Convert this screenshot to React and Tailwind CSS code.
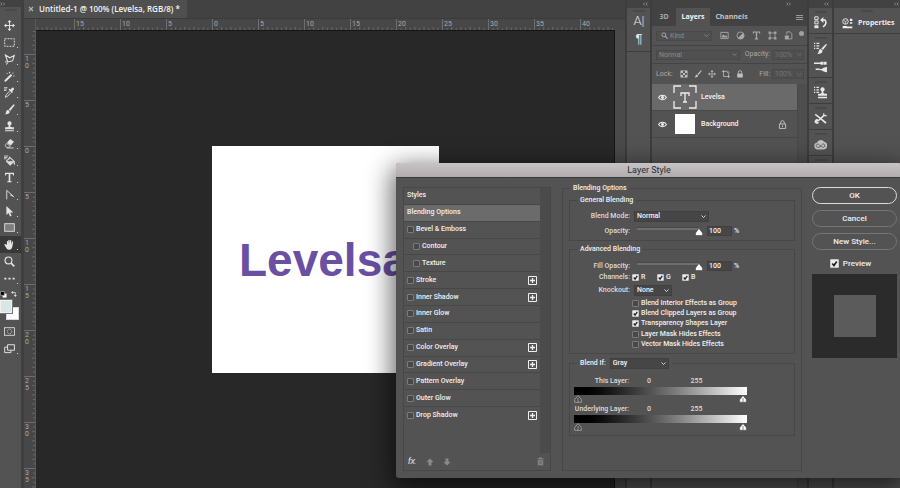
import { useState } from 'react';
import clsx from 'clsx';

const ICONS = {
  move: (
    <>
      <path d="M8 2v12M2 8h12" stroke="currentColor" strokeWidth="1.4" />
      <path d="M8 0l3 3.4H5zM8 16l3-3.4H5zM0 8l3.4-3v6zM16 8l-3.4-3v6z" />
    </>
  ),
  marquee: <rect x="1" y="2.5" width="14" height="11" fill="none" stroke="currentColor" strokeWidth="1.4" strokeDasharray="2.6 1.6" />,
  lasso: (
    <>
      <path d="M2 1.5l6.5 4L15 2l-2.5 8-7 1.5z" fill="none" stroke="currentColor" strokeWidth="1.5" />
      <path d="M5.5 11.5c-1.5-2-4-1-3 .8s3.5.2 2.5 1.7l-2 1.5" fill="none" stroke="currentColor" strokeWidth="1.2" />
    </>
  ),
  wand: (
    <>
      <path d="M1 13.2L10 4.5l2 2L3 15.2c-1.5 1-3-.5-2-2z" />
      <path d="M8 .5l.8 2 .9.4-2 .9L7 2zM13 2l1 1-1 1.2L12 3zM14.5 6l1 1.2-1 1.3-1-1.3zM4.500 2.5l1 1-1 1-1-1z" />
    </>
  ),
  eyedropper: (
    <>
      <path d="M9.5 3.5l2-2.2c1.5-1.3 4 .7 2.8 2.5l-2.3 2.3 1 1-1.5 1.5-5-5L8 2.5z" />
      <path d="M8 6l-5 5.5-1 3.5 3-1.3L10.2 8" fill="none" stroke="currentColor" strokeWidth="1.3" />
      <path d="M0 1h5M0 3h4M0 5h3.5" stroke="currentColor" strokeWidth="1.2" />
    </>
  ),
  brush: (
    <>
      <path d="M14.8.6c.8.5.4 1.5-.2 2.3L9 10 6.8 8 13 1.3c.6-.6 1.2-1 1.8-.7z" />
      <path d="M6 8.8l2.3 2.2c.2 3-3 4.5-7.3 3.8 2-1 1.5-2 2.2-4 .5-1.4 1.6-2 2.8-2z" />
    </>
  ),
  stamp: (
    <>
      <circle cx="8" cy="3.5" r="3" />
      <path d="M6.8 5h2.4v2.5c0 1 .8 1.5 5.3 1.7V12h-13V9.2c4.5-.2 5.3-.7 5.3-1.7zM1.5 13.3h13v1.7h-13z" />
    </>
  ),
  eraser: (
    <>
      <path d="M9 1.5l5.5 3.8L9.7 11 4.3 7z" />
      <path d="M3.7 7.8l5.4 4-1.5 1.9H4.2L1.5 11.5z" fill="none" stroke="currentColor" strokeWidth="1.1" />
      <path d="M4 14.5h10" stroke="currentColor" strokeWidth="1.2" />
    </>
  ),
  bucket: (
    <>
      <path d="M8.5 3.5l6 5.500-5.5 5.5L3.5 9z" fill="none" stroke="currentColor" strokeWidth="1.5" />
      <path d="M5 9.5l7.5-.5L9 13.5zM14.5 9c1.5 2 2 4 .8 5-1.3-.8-1.3-3-.8-5zM8 2v5" stroke="currentColor" strokeWidth=".7" />
      <path d="M0 1.5h6M0 3.5h5M0 5.5h3.5" stroke="currentColor" strokeWidth="1.2" />
    </>
  ),
  type: <path d="M1.5 1h13v4h-1.3c-.3-1.6-.8-2.2-2.3-2.2H9.2v9.4c0 1 .4 1.3 2 1.4V15H4.8v-1.4c1.6-.1 2-.4 2-1.4V2.8H5.1C3.6 2.8 3.1 3.4 2.8 5H1.5z" />,
  pen: <path d="M4 15V2l10 9-5-2.5" fill="none" stroke="currentColor" strokeWidth="1.3" />,
  arrow: <path d="M3.500 0v13.2l3.2-2.9 2 4.900 2.3-1-2-4.7H13.5z" />,
  rect: <rect x="1" y="2.5" width="14" height="11" fill="#7d7d7d" stroke="currentColor" strokeWidth="1.3" />,
  hand: <path d="M4.2 8.5V3.8c0-1.3 1.7-1.3 1.8 0L6.3 7V1.9c0-1.3 1.9-1.3 1.9 0V7l.6-4.7c.2-1.3 1.9-1 1.8.2L10.4 7.5l1.2-3.2c.4-1.2 2-.7 1.7.5L12.3 10c-.5 3.5-1.6 5.5-5 5.5-2.5 0-3.7-1.5-4.8-3.8L.7 8.700C.2 7.5 1.5 6.9 2.3 7.7z" />,
  zoom: (
    <>
      <circle cx="6.5" cy="6.5" r="5" fill="none" stroke="currentColor" strokeWidth="1.6" />
      <path d="M10.3 10.3L15 15" stroke="currentColor" strokeWidth="2.4" />
    </>
  ),
  dots: <path d="M.5 6.8h3v2.6h-3zM6.5 6.8h3v2.6h-3zM12.5 6.8h3v2.6h-3z" />,
  mask: (
    <>
      <rect x=".8" y="2.5" width="14.4" height="11" fill="none" stroke="currentColor" strokeWidth="1.2" />
      <circle cx="8" cy="8" r="3.3" fill="none" stroke="currentColor" strokeDasharray="1.5 1" />
    </>
  ),
  screens: (
    <>
      <path d="M5 6H1v8h9v-3" fill="none" stroke="currentColor" strokeWidth="1.4" />
      <path d="M5.2 2.5h10v8h-10z" fill="none" stroke="currentColor" strokeWidth="1.4" />
    </>
  ),
  history: (
    <>
      <path d="M1 1h4v3.5H1zM1 6.2h4v3.5H1z" fill="none" stroke="currentColor" strokeWidth="1.2" />
      <path d="M.5 11.5h5V15h-5z" />
      <path d="M9 5h4.5c2 2.5 1.5 6-2.5 8.5" fill="none" stroke="currentColor" strokeWidth="1.9" />
      <path d="M7.5 5l4-3.8v7.5z" />
    </>
  ),
  brushes: (
    <>
      <path d="M0 1h1.5v1.5H0zM3 1h3.5v1.5H3zM0 4h1.5v1.5H0zM3 4h3.5v1.5H3zM0 7h1.5v1.5H0zM3 7h3v1.5H3z" />
      <path d="M15.6 2.5c.5.5.2 1.2-.4 1.9L11 9.700 9 8l5.1-4.8c.6-.5 1.1-1 1.5-.7zM8.400 8.7l2.2 2c-.3 2.8-3 4.3-6.6 4 1.7-1 1.5-3 2.2-4.700.5-.9 1.2-1.3 2.2-1.3z" />
    </>
  ),
  sliders: (
    <>
      <path d="M0 3.200h8v1.6H0zM7 11h9v1.6H7zM8 2.200h3v3.600H8z" />
      <path d="M11.500 2.2h4v3.600h-4z" />
      <path d="M16 8.500v6.500c-3 0-5.5-1-7-3.200 1.500-2.300 4-3.300 7-3.300zM2 10.500h5v1.800H2z" />
    </>
  ),
  sourceStamp: (
    <>
      <path d="M0 1h1.5v1.5H0zM3 1h3v1.5H3zM0 4h1.5v1.5H0zM3 4h3v1.5H3zM0 7h1.5v1.5H0zM3 7h3v1.5H3z" />
      <circle cx="10.5" cy="4.2" r="2.6" />
      <path d="M9.5 5h2v3c0 1 1 1.4 4.5 1.6V12H5V9.600C8.5 9.4 9.5 9 9.5 8zM5 13.2h11V15H5z" />
    </>
  ),
  tools: (
    <>
      <path d="M1.500 3l6 4.500 3.500 3" fill="none" stroke="currentColor" strokeWidth="1.8" />
      <path d="M12 4.500L5 11" fill="none" stroke="currentColor" strokeWidth="1.8" />
      <path d="M12 1.500v3h3.500" fill="none" stroke="currentColor" strokeWidth="1.5" />
      <path d="M10.500 9l5 3.500-1.500 2-4.500-4zM5.500 9.500a2.800 2.800 0 1 0 .8 3L4 12.300z" />
    </>
  ),
  cloud: (
    <>
      <path d="M4.5 14a4.300 4.300 0 0 1-.7-8.500A5 5 0 0 1 12.500 4.700a4.700 4.700 0 0 1-.5 9.300z" opacity=".75" />
      <path d="M9 11l-3-3c-2.500-2-4.500 1.500-2.500 3s3.500 0 5-1.500 2.500-3 4-1.800 1 3.800-1 3.800-2-1-3-1.800" fill="none" stroke="#535353" strokeWidth="1" />
    </>
  ),
  properties: (
    <>
      <circle cx="5" cy="5" r="4" fill="none" stroke="currentColor" strokeWidth="1.3" />
      <path d="M2.5 3.5L5 5l2.5-1.5M5 5v3.5" stroke="currentColor" fill="none" />
      <path d="M11.5 1H15v3.5h-3.5zM11.5 6H15v2.500h-3.5zM1 11.5h6V15H1zM7 12.5h8V15H7z" />
    </>
  ),
  image: (
    <>
      <path d="M1.5 2.5h13v11h-13z" fill="none" stroke="currentColor" strokeWidth="1.6" />
      <path d="M3.5 11.5V9l2.5-3 2.5 3 2-1.5 2 2v2z" />
    </>
  ),
  adjust: (
    <>
      <circle cx="8" cy="8" r="6.3" fill="none" stroke="currentColor" strokeWidth="1.5" />
      <path d="M12.5 3.5a6.3 6.3 0 0 1-9 9z" />
    </>
  ),
  shape: (
    <>
      <path d="M3.5 3.5h9v9h-9z" fill="none" stroke="currentColor" strokeWidth="1.4" />
      <path d="M1 1h4v4H1zM11 1h4v4h-4zM1 11h4v4H1zM11 11h4v4h-4z" />
    </>
  ),
  smart: (
    <>
      <path d="M5 6V1.5h6L14 5v9H8" fill="none" stroke="currentColor" strokeWidth="1.5" />
      <path d="M1.5 8h7v7h-7z" />
    </>
  ),
  checker: (
    <>
      <path d="M1.5 1.5h13v13h-13z" fill="none" stroke="currentColor" strokeWidth="1.4" />
      <path d="M2 2h4v4H2zM10 2h4v4h-4zM6 6h4v4H6zM2 10h4v4H2zM10 10h4v4h-4z" />
    </>
  ),
  artboard: <path d="M3 0v13h13M0 3h9l4 4v9M10 1l5 5" fill="none" stroke="currentColor" strokeWidth="1.5" />,
  lock: (
    <>
      <path d="M2.5 7h11v8h-11z" />
      <path d="M4.8 7V4.500a3.2 3.2 0 0 1 6.4 0V7" fill="none" stroke="currentColor" strokeWidth="1.7" />
    </>
  ),
  lockOutline: (
    <>
      <path d="M2.5 7h11v8h-11z" fill="none" stroke="currentColor" strokeWidth="1.5" />
      <path d="M4.8 7V4.500a3.2 3.2 0 0 1 6.4 0V7M8 9.5v3" fill="none" stroke="currentColor" strokeWidth="1.5" />
    </>
  ),
  eye: (
    <>
      <path d="M1 8c3-5.3 11-5.3 14 0-3 5.3-11 5.3-14 0z" fill="none" stroke="currentColor" strokeWidth="1.8" />
      <circle cx="8" cy="8" r="2.6" />
    </>
  ),
  up: <path d="M8 1l7 7h-4v7H5V8H1z" />,
  down: <path d="M8 15l7-7h-4V1H5v7H1z" />,
  trash: (
    <>
      <path d="M2 2.5h4V1h4v1.5h4V4H2z" />
      <path d="M3 5h10v10H3zM6 7v6M8 7v6M10 7v6" stroke="#535353" strokeWidth=".8" />
    </>
  ),
  swap: (
    <>
      <path d="M4 4h7.500v8" fill="none" stroke="currentColor" strokeWidth="2" />
      <path d="M5.500 0v8L0 4zM7.500 10.500h8L11.500 16z" />
    </>
  ),
  defaults: (
    <>
      <path d="M6 6h9v9H6z" fill="#fff" />
      <path d="M1 1h9v9H1z" fill="#000" stroke="#bbb" strokeWidth="1.5" />
    </>
  ),
  search: (
    <>
      <circle cx="6.5" cy="6.5" r="4.5" fill="none" stroke="currentColor" strokeWidth="2" />
      <path d="M10 10l5 5" stroke="currentColor" strokeWidth="2.4" />
    </>
  ),
};

const Icon = ({ name, className }) => (
  <svg viewBox="0 0 16 16" fill="currentColor" aria-hidden="true" className={clsx('shrink-0', className)}>
    {ICONS[name]}
  </svg>
);

const Chevron = ({ className }) => (
  <svg viewBox="0 0 10 6" fill="none" stroke="currentColor" strokeWidth="1.6" className={clsx('w-[5px] h-[3px] pointer-events-none', className)}>
    <path d="M1 1l4 4 4-4" />
  </svg>
);

const Collapse = ({ right = false, className }) => (
  <svg viewBox="0 0 10 8" fill="none" stroke="#a8a8a8" strokeWidth="1.3" className={clsx('w-[5px] h-1', className)}>
    <path d={right ? 'M1 1l3 3-3 3M6 1l3 3-3 3' : 'M4 1L1 4l3 3M9 1L6 4l3 3'} />
  </svg>
);

const Grip = () => <div className="mx-auto h-0.5 w-3 shrink-0 border-y border-[#494949]" />;

const TOOLS = [
  ['move', 'Move'], ['marquee', 'Marquee'], ['lasso', 'Lasso'], ['wand', 'Magic Wand'],
  ['eyedropper', 'Eyedropper'], ['brush', 'Brush'], ['stamp', 'Clone Stamp'], ['eraser', 'Eraser'],
  ['bucket', 'Paint Bucket'], ['type', 'Type'], ['pen', 'Pen'], ['arrow', 'Path Selection'],
  ['rect', 'Rectangle'], ['hand', 'Hand'], ['zoom', 'Zoom'], ['dots', 'Edit Toolbar'],
];

const ToolButton = ({ name, label, active, onClick }) => (
  <button
    aria-label={label}
    onClick={onClick}
    className={clsx('relative grid place-items-center pr-0.5', active && 'bg-[#383838]')}
  >
    <Icon name={name} className="w-[11px] h-[11px]" />
    {name !== 'move' && name !== 'zoom' && name !== 'mask' && (
      <span className="absolute bottom-[3px] right-[3px] w-px h-px bg-[#d0d0d0]" />
    )}
  </button>
);

const Toolbar = () => {
  const [tool, setTool] = useState('hand');

  return (
    <aside className="w-[21px] shrink-0 bg-[#535353] text-[#e4e4e4] flex flex-col">
      <div className="h-[7px] shrink-0 bg-[#424242] flex items-center">
        <Collapse right />
      </div>
      <div className="h-[10px] shrink-0 pt-0.5"><Grip /></div>
      <div className="grid auto-rows-fr h-[270px] shrink-0">
        {TOOLS.map(([name, label]) => (
          <ToolButton key={name} name={name} label={label} active={tool === name} onClick={() => setTool(name)} />
        ))}
      </div>
      <div className="flex items-center justify-between h-3 pr-1 mt-px">
        <Icon name="defaults" className="w-[7px] h-[7px]" />
        <Icon name="swap" className="w-[6px] h-[6px]" />
      </div>
      <div className="relative h-5">
        <span className="absolute right-0.5 bottom-0 w-[13px] h-[13px] bg-white border border-[#d8d8d8]" />
        <span className="absolute left-0 top-0 w-3 h-[13px] bg-[#d8e6e6] border border-[#f0f0f0] shadow-[0_0_0_1px_#777]" />
      </div>
      <div className="grid auto-rows-fr h-[34px] mt-[3px]">
        <ToolButton name="mask" label="Quick Mask" />
        <ToolButton name="screens" label="Screen Mode" />
      </div>
    </aside>
  );
};

const TICKS = Array.from({ length: 9 }, (_, i) => (i + 1) * 4.6);

const RulerCell = ({ label, vertical }) => (
  <div className={clsx('relative shrink-0 border-[#6d6d6d]', vertical ? 'h-[46px] border-t' : 'w-[46px] border-l')}>
    <svg className="absolute inset-0 w-full h-full" stroke="#6a6a6a" strokeWidth="1">
      {TICKS.map((t, i) =>
        vertical ? (
          <path key={t} d={`M${i % 2 ? 8 : 9} ${t - 0.5}H12`} />
        ) : (
          <path key={t} d={`M${t - 0.5} ${i % 2 ? 8 : 9}V12`} />
        )
      )}
    </svg>
    <span className={clsx('relative block text-[7px] leading-[7px] text-[#a9a9a9]', vertical ? 'w-1 ml-px pt-px break-all' : 'pl-px pt-0.5')}>{label}</span>
  </div>
);

const Document = () => (
  <main className="flex-1 min-w-0 flex flex-col">
    <div className="h-[18px] shrink-0 flex bg-[#424242]">
      <div className="flex items-center gap-[5px] bg-[#4f4f4f] pl-1 pr-[7px] font-['Open_Sans'] text-[8px] font-semibold text-[#f4f4f4] whitespace-nowrap">
        <button aria-label="Close document" className="w-[6px] h-[6px] text-[#b0b0b0]">
          <svg viewBox="0 0 6 6" stroke="currentColor" strokeWidth="1.2"><path d="M1 1l4 4M5 1L1 5" /></svg>
        </button>
        Untitled-1 @ 100% (Levelsa, RGB/8) *
      </div>
    </div>
    <div className="h-3 shrink-0 flex bg-[#474747] border-t border-[#3b3b3b]">
      <div className="w-3 shrink-0 border-r border-[#5a5a5a]" />
      <div className="flex-1 min-w-0 flex overflow-hidden mr-[10px]">
        <div className="w-[38px] shrink-0 flex justify-end overflow-hidden"><RulerCell /></div>
        {['15', '10', '5', '0', '5', '10', '15', '20', '25', '30', '35', '40'].map((n, i) => (
          <RulerCell key={i} label={n} />
        ))}
      </div>
    </div>
    <div className="flex-1 min-h-0 flex">
      <div className="w-3 shrink-0 bg-[#474747] overflow-hidden border-r border-[#5a5a5a]">
        <div className="h-6 flex flex-col justify-end overflow-hidden"><RulerCell vertical /></div>
        {['10', '5', '0', '5', '10', '15', '20', '25', '30', '35'].map((n, i) => (
          <RulerCell key={i} label={n} vertical />
        ))}
      </div>
      <div className="relative flex-1 bg-[#282828] border-t border-r border-[#151515] overflow-hidden">
        <div className="absolute left-[176px] top-[115px] w-[227px] h-[227px] bg-white overflow-hidden">
          <p className="pl-[27px] pt-[88px] font-['Liberation_Sans'] text-[46px] leading-[52px] font-bold text-[#6a50a3]">Levelsa</p>
        </div>
      </div>
      <div className="w-[10px] shrink-0 bg-[#4a4a4a]" />
    </div>
  </main>
);

const CharacterDock = () => (
  <aside className="w-[25px] shrink-0 border-l-2 border-[#3d3d3d] bg-[#535353] text-[#e6e6e6] flex flex-col">
    <div className="h-2 shrink-0 bg-[#424242] flex items-center justify-end pr-0.5"><Collapse /></div>
    <div className="h-11 border-b border-[#3d3d3d] pt-0.5 pl-px flex flex-col items-center">
      <Grip />
      <button className="text-[13px] leading-[18px] font-['Roboto'] font-light">A|</button>
      <button className="text-[13px] leading-[18px] font-['Liberation_Sans']">¶</button>
    </div>
  </aside>
);

const DimSelect = ({ label, value, className, icon, faint }) => (
  <label className={clsx('relative flex items-center h-[10px] border border-[#494949] bg-[#505050]', faint ? 'text-[#707070]' : 'text-[#8c8c8c]', className)}>
    {icon && <Icon name={icon} className="w-[7px] h-[7px] ml-1 text-[#b0b0b0]" />}
    <select aria-label={label} className="appearance-none w-full pl-0.5 text-[7px] leading-[8px] outline-none">
      <option>{value}</option>
    </select>
    {faint && <span className="absolute inset-y-0 right-2 border-l border-[#494949]" />}
    <Chevron className={clsx('absolute', faint ? 'right-px' : 'right-0.5')} />
  </label>
);

const LayerRow = ({ name, selected, locked, children }) => (
  <li className={clsx('flex items-center h-[27px] pl-[6px] pr-[10px] border-b border-[#484848]', selected && 'bg-[#6a6a6a]')}>
    <button aria-label={`Toggle ${name}`}><Icon name="eye" className="w-[9px] h-[9px] text-[#f0f0f0]" /></button>
    <div className="w-6 h-6 ml-[6px] mr-1 grid place-items-center shrink-0">{children}</div>
    <span className="flex-1 text-[7px] font-medium text-[#f4f4f4]">{name}</span>
    {locked && <Icon name="lockOutline" className="w-[9px] h-[9px] text-[#d0d0d0]" />}
  </li>
);

const LayersPanel = () => (
  <section className="w-[159px] shrink-0 border-x-2 border-[#3d3d3d] bg-[#4e4e4e] flex flex-col text-[#a8a8a8] text-[7px]">
    <div className="h-2 shrink-0 bg-[#424242] flex items-center justify-end pr-4"><Collapse right /></div>
    <div className="h-[18px] shrink-0 flex items-stretch bg-[#424242] font-['Open_Sans'] font-bold">
      <button className="w-6">3D</button>
      <button className="w-[34px] bg-[#535353] text-[#f4f4f4]">Layers</button>
      <button className="w-[43px] text-[#c4c4c4]">Channels</button>
      <button aria-label="Panel menu" className="ml-auto mr-1 w-[7px]">
        <span className="block h-[5px] border-y border-[#999] bg-[linear-gradient(#424242_1px,#999_1px,#999_2px,#424242_2px)]" />
      </button>
    </div>
    <div className="h-5 shrink-0 flex items-center border-b border-[#444] bg-[#535353] pl-1 pr-[3px]">
      <DimSelect label="Filter kind" value="Kind" icon="search" className="w-14" />
      <div className="flex items-center gap-[7px] ml-2">
        {['image', 'adjust', 'type', 'shape', 'smart'].map((n) => (
          <button key={n} aria-label={`Filter ${n}`}><Icon name={n} className="w-[9px] h-[9px]" /></button>
        ))}
      </div>
      <span className="ml-auto mb-1 w-[5px] h-[5px] rounded-full bg-[#a0a0a0]" />
    </div>
    <div className="h-[18px] shrink-0 flex items-center border-b border-[#444] bg-[#535353] pl-1 pr-[3px]">
      <DimSelect label="Blend mode" value="Normal" className="w-[84px]" />
      <span className="flex-1 text-right pr-0.5">Opacity:</span>
      <DimSelect label="Opacity" value="100%" faint className="w-8" />
    </div>
    <div className="h-5 shrink-0 flex items-center bg-[#535353] pl-1 pr-[3px]">
      <span className="w-6">Lock:</span>
      <div className="flex items-center gap-[6px]">
        {['checker', 'brush', 'move', 'artboard', 'lock'].map((n) => (
          <button key={n} aria-label={`Lock ${n}`}><Icon name={n} className="w-[8px] h-[8px] text-[#c0c0c0]" /></button>
        ))}
      </div>
      <span className="flex-1 text-right pr-0.5">Fill:</span>
      <DimSelect label="Fill" value="100%" faint className="w-8" />
    </div>
    <ul className="mr-[9px] flex-1 border-r border-[#484848] bg-[#535353]">
      <LayerRow name="Levelsa" selected>
        <svg viewBox="0 0 24 24" className="w-6 h-6" fill="none" stroke="#eee" strokeWidth="1.3">
          <path d="M1 8V1h7M16 1h7v7M23 16v7h-7M8 23H1v-7" />
          <path d="M8 11V8h8v3M12 8v9M10 17h4" />
        </svg>
      </LayerRow>
      <LayerRow name="Background" locked>
        <span className="w-5 h-5 bg-white" />
      </LayerRow>
    </ul>
  </section>
);

const DOCK_GROUPS = [['history'], ['brushes', 'sliders'], ['sourceStamp'], ['tools'], ['cloud'], ['image']];

const IconDock = () => (
  <aside className="w-[25px] shrink-0 border-r-2 border-[#3d3d3d] bg-[#535353] text-[#e8e8e8] flex flex-col">
    <div className="h-2 shrink-0 bg-[#424242] flex items-center justify-end pr-[3px]"><Collapse /></div>
    {DOCK_GROUPS.map((group) => (
      <div key={group[0]} className="border-b border-[#3d3d3d] pt-[3px] pb-0.5 flex flex-col items-center">
        <Grip />
        {group.map((n) => (
          <button key={n} aria-label={n} className="grid place-items-center h-[18px]">
            <Icon name={n} className="w-[13px] h-[13px]" />
          </button>
        ))}
      </div>
    ))}
  </aside>
);

const PropertiesPanel = () => (
  <section className="w-[66px] shrink-0 bg-[#535353] flex flex-col">
    <div className="h-2 shrink-0 bg-[#424242] flex items-center justify-end pr-px"><Collapse /></div>
    <div className="h-[26px] pt-0.5 border-b border-[#3d3d3d]">
      <Grip />
      <button className="flex items-center gap-[5px] pl-2 h-[22px] font-['Open_Sans'] text-[7px] font-bold text-[#f0f0f0]">
        <Icon name="properties" className="w-[11px] h-[11px]" />
        Properties
      </button>
    </div>
  </section>
);

const Check = ({ label, checked = false, big = false, className }) => (
  <label className={clsx('flex items-center', big ? 'gap-1 text-[8px]' : 'gap-0.5', className)}>
    <span className={clsx('relative grid shrink-0', big ? 'w-[9px] h-[9px]' : 'w-[7px] h-[7px]')}>
      <input
        type="checkbox"
        defaultChecked={checked}
        className="peer appearance-none w-full h-full rounded-[1px] border border-[#7a7a7a] bg-[#484848] checked:bg-[#ececec] checked:border-[#c4c4c4]"
      />
      <svg viewBox="0 0 8 8" fill="none" stroke="#222" strokeWidth="1.5" className="absolute inset-0 hidden peer-checked:block pointer-events-none">
        <path d="M2 4l1.500 1.800L6 2.200" />
      </svg>
    </span>
    {label}
  </label>
);

const EFFECTS = [
  { name: 'Bevel & Emboss' },
  { name: 'Contour', nested: true },
  { name: 'Texture', nested: true },
  { name: 'Stroke', add: true },
  { name: 'Inner Shadow', add: true },
  { name: 'Inner Glow' },
  { name: 'Satin' },
  { name: 'Color Overlay', add: true },
  { name: 'Gradient Overlay', add: true },
  { name: 'Pattern Overlay' },
  { name: 'Outer Glow' },
  { name: 'Drop Shadow', add: true },
];

const StyleList = () => (
  <div className="w-[148px] shrink-0 border border-[#474747] flex flex-col">
    <div className="flex-1 flex">
      <ul className="flex-1 grid auto-rows-fr h-[236px]">
        <li className="flex items-center pl-[3px] border-b border-[#474747]"><button>Styles</button></li>
        <li className="flex items-center pl-[3px] border-b border-[#474747] bg-[#6b6b6b]"><button>Blending Options</button></li>
        {EFFECTS.map((fx, i) => (
          <li
            key={fx.name}
            className={clsx('flex items-center justify-between pr-[3px]', fx.nested ? 'pl-[9px]' : 'pl-[3px]', i < EFFECTS.length - 1 && 'border-b border-[#474747]')}
          >
            <Check label={fx.name} />
            {fx.add && (
              <button aria-label={`Add ${fx.name}`} className="text-[#f0f0f0]">
                <svg viewBox="0 0 9 9" className="w-[9px] h-[9px]" fill="none" stroke="currentColor">
                  <path d="M.5.5h8v8h-8z" />
                  <path d="M2 4.5h5M4.5 2v5" strokeWidth="1.3" />
                </svg>
              </button>
            )}
          </li>
        ))}
      </ul>
      <div className="w-[10px] bg-[#4b4b4b]" />
    </div>
    <div className="h-[17px] flex items-center gap-[9px] pl-1 pr-[5px] text-[#8a8a8a]">
      <button className="font-['Liberation_Sans'] italic text-[9px] leading-[9px] text-[#e8e8e8]">fx<span className="text-[6px]">.</span></button>
      <button aria-label="Move up"><Icon name="up" className="w-[8px] h-[8px]" /></button>
      <button aria-label="Move down"><Icon name="down" className="w-[8px] h-[8px]" /></button>
      <button aria-label="Delete" className="ml-auto"><Icon name="trash" className="w-[9px] h-[9px]" /></button>
    </div>
  </div>
);

const Group = ({ title, outer = false, className, children }) => (
  <fieldset className={clsx('border border-[#474747]', className)}>
    <legend className={clsx('px-[3px]', outer ? 'ml-px' : 'ml-[7px]')}>{title}</legend>
    {children}
  </fieldset>
);

const Select = ({ id, value, className }) => (
  <span className={clsx('relative flex items-center h-[11px] bg-[#464646] border border-[#404040] text-[#f4f4f4]', className)}>
    <select id={id} className="appearance-none w-full h-full pl-0.5 leading-[9px] outline-none">
      <option>{value}</option>
    </select>
    <Chevron className="absolute right-0.5" />
  </span>
);

const Field = ({ id, label, className, children }) => (
  <div className={clsx('flex items-center', className)}>
    <label htmlFor={id} className="w-[60px] shrink-0 text-right text-[#dcdcdc]">{label}</label>
    {children}
  </div>
);

const OpacityField = ({ id, label, className }) => {
  const [value, setValue] = useState(100);
  return (
    <Field id={id} label={label} className={clsx('h-[10px]', className)}>
      <div className="relative ml-[7px] w-[62px] h-full">
        <div className="mt-px h-[3px] bg-[#6e6e6e] border-t border-[#474747]" />
        <svg viewBox="0 0 8 8" className="absolute top-[2px] w-2 h-2 -translate-x-1/2" style={{ left: `${value}%` }}>
          <path d="M4 .5L7.500 5V7.500H.5V5z" fill="#fff" stroke="#333" strokeWidth=".5" />
        </svg>
        <input
          type="range"
          aria-label={label}
          value={value}
          onChange={(e) => setValue(Number(e.target.value))}
          className="absolute inset-0 w-full h-full opacity-0"
        />
      </div>
      <input
        id={id}
        value={value}
        onChange={(e) => setValue(Number(e.target.value) || 0)}
        className="ml-2 w-[25px] h-[10px] pl-px bg-[#464646] border border-[#404040] text-[#f4f4f4] outline-none"
      />
      <span className="ml-0.5">%</span>
    </Field>
  );
};

const BlendRange = ({ label }) => {
  const [low, setLow] = useState(0);
  const [high, setHigh] = useState(255);
  const stops = [
    { value: low, set: setLow, fill: '#4a4a4a', line: '#b8b8b8', name: 'black' },
    { value: high, set: setHigh, fill: '#ffffff', line: '#555555', name: 'white' },
  ];
  return (
    <div className="w-[173px]">
      <div className="flex items-center h-[10px] pb-px text-[#dcdcdc]">
        <span className="w-[55px] text-right">{label}</span>
        <span className="w-10 text-center">{low}</span>
        <span className="w-[55px] text-center">{high}</span>
      </div>
      <div className="h-2 bg-linear-to-r from-black to-white" />
      <div className="relative mx-1 h-2">
        {stops.map((s) => (
          <svg key={s.name} viewBox="0 0 8 8" className="absolute top-0 w-2 h-2 -translate-x-1/2" style={{ left: `${(s.value / 255) * 100}%` }}>
            <path d="M4 .6L7.300 4.600V7.300H.7V4.600zM4 3v4.300" fill={s.fill} stroke={s.line} strokeWidth=".7" />
          </svg>
        ))}
        {stops.map((s) => (
          <input
            key={s.name}
            type="range"
            max="255"
            aria-label={`${label} ${s.name}`}
            value={s.value}
            onChange={(e) => s.set(Number(e.target.value))}
            className="absolute inset-0 w-full h-full opacity-0"
          />
        ))}
      </div>
    </div>
  );
};

const BlendingOptions = () => (
  <Group outer title="Blending Options" className="flex-1 -mt-[3px] ml-[11px] pt-[3px] px-[6px]">
    <Group title="General Blending" className="pt-[6px] pb-1">
      <Field id="mode" label="Blend Mode:">
        <Select id="mode" value="Normal" className="ml-1 w-[75px]" />
      </Field>
      <OpacityField id="opacity" label="Opacity:" className="mt-1" />
    </Group>
    <Group title="Advanced Blending" className="mt-1 pt-[7px] pb-[3px]">
      <OpacityField id="fill" label="Fill Opacity:" />
      <div className="flex items-center h-[9px] mt-0.5">
        <span className="w-[60px] text-right text-[#dcdcdc]">Channels:</span>
        <div className="flex ml-0.5">
          <Check label="R" checked className="w-[25px]" />
          <Check label="G" checked className="w-[25px]" />
          <Check label="B" checked className="w-[25px]" />
        </div>
      </div>
      <Field id="knockout" label="Knockout:" className="mt-[3px]">
        <Select id="knockout" value="None" className="ml-1 w-[38px]" />
      </Field>
      <div className="grid auto-rows-fr h-[52px] mt-0.5 ml-[62px]">
        <Check label="Blend Interior Effects as Group" />
        <Check label="Blend Clipped Layers as Group" checked />
        <Check label="Transparency Shapes Layer" checked />
        <Check label="Layer Mask Hides Effects" />
        <Check label="Vector Mask Hides Effects" />
      </div>
    </Group>
    <fieldset className="mt-1 border border-[#474747] pt-2 pb-1 px-1">
      <legend className="ml-[3px] px-[3px] flex items-center">
        <label htmlFor="blendif" className="mr-1">Blend If:</label>
        <Select id="blendif" value="Gray" className="w-[59px]" />
      </legend>
      <BlendRange label="This Layer:" />
      <div className="mt-0.5">
        <BlendRange label="Underlying Layer:" />
      </div>
    </fieldset>
  </Group>
);

const LayerStyleDialog = () => (
  <div
    role="dialog"
    aria-labelledby="dialog-title"
    className="absolute left-[396px] top-[163px] w-[506px] rounded-t-[4px] rounded-b-[3px] overflow-hidden bg-[#535353] text-[#f0f0f0] text-[7px] leading-[9px] font-medium shadow-[0_8px_26px_4px_rgba(0,0,0,0.6)]"
  >
    <h1 id="dialog-title" className="h-[15px] text-center text-[9px] leading-[15px] font-normal text-[#2c2c2c] bg-linear-to-b from-[#c8c3c5] to-[#b0abad] border-b border-[#3c3c3c]">
      Layer Style
    </h1>
    <div className="flex h-[300px] pt-[9px] pb-[7px] pl-[7px] pr-[5px]">
      <StyleList />
      <BlendingOptions />
      <div className="w-[85px] ml-[10px] flex flex-col gap-[6px] text-[8px]">
        <button className="h-[17px] rounded-full border border-[#dcdcdc]">OK</button>
        <button className="h-[17px] rounded-full border border-[#757575]">Cancel</button>
        <button className="h-[17px] rounded-full border border-[#757575]">New Style...</button>
        <Check label="Preview" checked big className="justify-center pt-[3px] pr-2" />
        <div className="h-[84px] bg-[#2b2b2b] grid place-items-center">
          <div className="w-[42px] h-[42px] bg-[#5b5b5b]" />
        </div>
      </div>
    </div>
  </div>
);

const App = () => {
  return (
    <div className="relative flex h-screen overflow-hidden bg-[#424242] font-['Roboto',sans-serif]">
      <Toolbar />
      <div className="w-[3px] shrink-0 bg-[#3f3f3f]" />
      <Document />
      <CharacterDock />
      <LayersPanel />
      <IconDock />
      <PropertiesPanel />
      <LayerStyleDialog />
    </div>
  );
};

export default App;
